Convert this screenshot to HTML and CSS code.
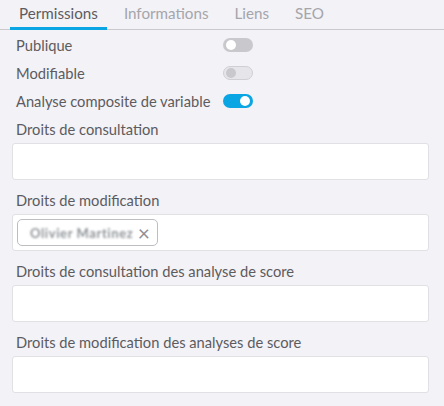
FILE: index.html
```html
<!DOCTYPE html>
<html lang="fr">
<head>
<meta charset="utf-8">
<link rel="stylesheet" href="styles.css">
</head>
<body>
<div class="page">
  <nav class="tabs">
    <div class="tab active">Permissions</div>
    <div class="tab">Informations</div>
    <div class="tab">Liens</div>
    <div class="tab">SEO</div>
  </nav>
  <div class="content">
    <div class="switch-row">
      <span class="switch-label">Publique</span>
      <span class="toggle off"><span class="knob"></span></span>
    </div>
    <div class="switch-row">
      <span class="switch-label">Modifiable</span>
      <span class="toggle disabled"><span class="knob"></span></span>
    </div>
    <div class="switch-row">
      <span class="switch-label">Analyse composite de variable</span>
      <span class="toggle on"><span class="knob"></span></span>
    </div>

    <div class="field first">
      <label class="field-label">Droits de consultation</label>
      <div class="input"></div>
    </div>
    <div class="field">
      <label class="field-label">Droits de modification</label>
      <div class="input">
        <span class="chip"><span class="blur">Olivier Martinez</span><span class="chip-x">×</span></span>
      </div>
    </div>
    <div class="field">
      <label class="field-label">Droits de consultation des analyse de score</label>
      <div class="input"></div>
    </div>
    <div class="field">
      <label class="field-label">Droits de modification des analyses de score</label>
      <div class="input"></div>
    </div>
  </div>
</div>
</body>
</html>
```
FILE: styles.css
```css
html, body {
  margin: 0;
  padding: 0;
  background: #f2f2f7;
}
body {
  font-family: Lato, "Noto Sans", sans-serif;
  color: #5d5b5e;
  font-size: 14.7px;
}
.page {
  width: 444px;
  height: 406px;
  overflow: hidden;
}
.tabs {
  display: flex;
  border-bottom: 1px solid #c9c9ce;
  padding-left: 10px;
  height: 30px;
  box-sizing: border-box;
}
.tab {
  padding: 4px 9px 0;
  font-size: 15.2px;
  color: #a5a5aa;
  margin-right: 8px;
}
.tab.active {
  color: #5d5b5e;
  border-bottom: 3px solid #0aa5e3;
  margin-bottom: -1px;
}
.content {
  padding: 0 15px 0 12px;
}
.switch-row {
  display: flex;
  align-items: center;
  height: 28px;
  padding-left: 4px;
}
.switch-row:first-child {
  margin-top: 1px;
}
.switch-label {
  width: 207px;
}
.toggle {
  position: relative;
  width: 30px;
  height: 14px;
  border-radius: 7px;
  box-sizing: border-box;
}
.toggle .knob {
  position: absolute;
  top: 2px;
  width: 10px;
  height: 10px;
  border-radius: 50%;
  background: #fff;
}
.toggle.off {
  background: #c8c8cd;
}
.toggle.off .knob { left: 3px; }
.toggle.disabled {
  background: #e6e6ea;
  border: 1px solid #d0d0d4;
}
.toggle.disabled .knob {
  left: 2px;
  top: 1px;
  background: #c8c8cd;
}
.toggle.on {
  background: #0aa5e3;
}
.toggle.on .knob { right: 3px; }
.field {
  margin-top: 9px;
}
.field.first {
  margin-top: 3px;
}
.field-label {
  display: block;
  padding-left: 4px;
  height: 22px;
  line-height: 22px;
}
.input {
  margin-top: 3px;
  height: 37px;
  background: #fff;
  border: 1px solid #e0e0e5;
  border-radius: 3px;
  box-sizing: border-box;
  display: flex;
  align-items: center;
  padding-left: 4px;
}
.chip {
  display: flex;
  align-items: center;
  height: 27px;
  width: 141px;
  box-sizing: border-box;
  border: 1px solid #bdbdc2;
  border-radius: 5px;
  padding: 0 7px 0 12px;
  justify-content: space-between;
}
.blur {
  color: #8f9498;
  filter: blur(1.3px);
  font-size: 13px;
  letter-spacing: 0.6px;
  font-weight: 700;
}
.chip-x {
  color: #909096;
  font-size: 21px;
  line-height: 1;
}
```
